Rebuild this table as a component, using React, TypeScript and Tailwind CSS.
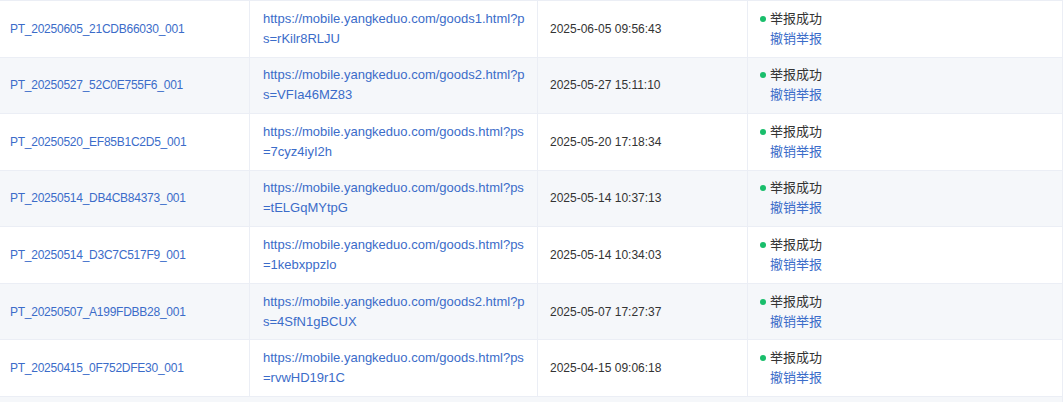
import React from "react";

const rows = [
  { id: "PT_20250605_21CDB66030_001", u1: "https://mobile.yangkeduo.com/goods1.html?p", u2: "s=rKilr8RLJU", t: "2025-06-05 09:56:43" },
  { id: "PT_20250527_52C0E755F6_001", u1: "https://mobile.yangkeduo.com/goods2.html?p", u2: "s=VFIa46MZ83", t: "2025-05-27 15:11:10" },
  { id: "PT_20250520_EF85B1C2D5_001", u1: "https://mobile.yangkeduo.com/goods.html?ps", u2: "=7cyz4iyI2h", t: "2025-05-20 17:18:34" },
  { id: "PT_20250514_DB4CB84373_001", u1: "https://mobile.yangkeduo.com/goods.html?ps", u2: "=tELGqMYtpG", t: "2025-05-14 10:37:13" },
  { id: "PT_20250514_D3C7C517F9_001", u1: "https://mobile.yangkeduo.com/goods.html?ps", u2: "=1kebxppzlo", t: "2025-05-14 10:34:03" },
  { id: "PT_20250507_A199FDBB28_001", u1: "https://mobile.yangkeduo.com/goods2.html?p", u2: "s=4SfN1gBCUX", t: "2025-05-07 17:27:37" },
  { id: "PT_20250415_0F752DFE30_001", u1: "https://mobile.yangkeduo.com/goods.html?ps", u2: "=rvwHD19r1C", t: "2025-04-15 09:06:18" },
];

export default function App() {
  return (
    <div
      className="w-[1064px] h-[402px] overflow-hidden bg-white text-[13px] leading-[20px]"
      style={{ fontFamily: '"Liberation Sans", "Noto Sans CJK SC", sans-serif' }}
    >
      <div className="w-[1063px] border-t border-r border-[#ebeef5]">
        {rows.map((r, i) => (
          <div
            key={r.id}
            className={`flex h-[56.57px] border-b border-[#ebeef5] ${i % 2 === 1 ? "bg-[#f5f7fa]" : "bg-white"}`}
          >
            <div className="w-[250px] shrink-0 border-r border-[#ebeef5] flex items-center pl-[10px] text-[12px] tracking-[-0.25px] text-[#3b6cc9]">
              {r.id}
            </div>
            <div className="w-[288px] shrink-0 border-r border-[#ebeef5] flex flex-col justify-center pl-[13px] text-[#3b6cc9]">
              <div>{r.u1}</div>
              <div>{r.u2}</div>
            </div>
            <div className="w-[210px] shrink-0 border-r border-[#ebeef5] flex items-center pl-[12px] text-[12px] text-[#333]">
              {r.t}
            </div>
            <div className="flex-1 flex flex-col justify-center pl-[12px]">
              <div className="flex items-center text-[#333]">
                <span className="w-[6px] h-[6px] rounded-full bg-[#19be6b] mr-[4px]" />
                举报成功
              </div>
              <div className="pl-[10px] text-[#3b6cc9]">撤销举报</div>
            </div>
          </div>
        ))}
        <div className="h-[20px] bg-[#f5f7fa]" />
      </div>
    </div>
  );
}
